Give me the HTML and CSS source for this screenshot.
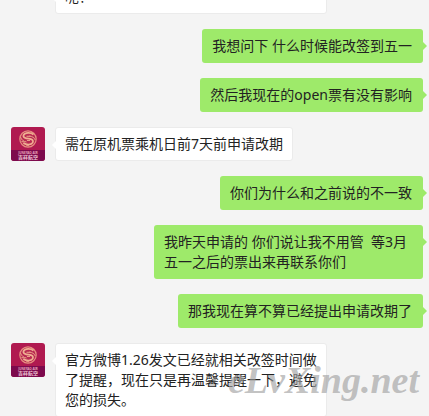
FILE: index.html
```html
<!DOCTYPE html>
<html lang="zh-CN">
<head>
    <meta charset="UTF-8">
    <meta name="viewport" content="width=device-width, initial-scale=1.0">
    <title>聊天记录</title>
    <link rel="stylesheet" href="styles.css">
</head>
<body>
    <!-- airline logo, used by each received message -->
    <svg class="symbols" aria-hidden="true">
        <symbol id="logo" viewBox="0 0 34 34">
            <rect width="34" height="34" fill="#b01a50"/>
            <rect y="23" width="34" height="11" fill="#7d0a4d"/>
            <circle cx="17" cy="12" r="8.2" fill="#b92a52" stroke="#e58f80" stroke-width="1.2"/>
            <path d="M22.500 7.500c-2.500-2.200-8.500-2.300-9.800.3-1.300 2.800 2.300 3.500 5 3.800 3.300.4 5.200 1.800 4 4.100-1.500 2.600-6.500 2.400-9.300.3" fill="none" stroke="#f0b092" stroke-width="1.700"/>
            <path d="M9.500 10c1 3 3 4.500 6 5M24.300 13c-1-2.500-3-3.500-6-4M10.500 14.500l3 .5M20 5.800l3 1M15 18l3 .8M15.500 9.300h4M16 13.500h3" fill="none" stroke="#e9a088" stroke-width="1"/>
            <text class="logo-en" x="17" y="27" text-anchor="middle">JUNEYAO AIR</text>
            <text class="logo-cn" x="17" y="32" text-anchor="middle">吉祥航空</text>
        </symbol>
    </svg>

    <main class="chat">
        <div class="message received">
            <div class="bubble wide">呢？</div>
        </div>
        <div class="message sent">
            <div class="bubble">我想问下 什么时候能改签到五一</div>
        </div>
        <div class="message sent">
            <div class="bubble">然后我现在的open票有没有影响</div>
        </div>
        <div class="message received">
            <svg class="avatar" role="img" aria-label="吉祥航空"><use href="#logo"/></svg>
            <div class="bubble">需在原机票乘机日前7天前申请改期</div>
        </div>
        <div class="message sent">
            <div class="bubble">你们为什么和之前说的不一致</div>
        </div>
        <div class="message sent">
            <div class="bubble">我昨天申请的 你们说让我不用管&nbsp; 等3月五一之后的票出来再联系你们</div>
        </div>
        <div class="message sent">
            <div class="bubble">那我现在算不算已经提出申请改期了</div>
        </div>
        <div class="message received">
            <svg class="avatar" role="img" aria-label="吉祥航空"><use href="#logo"/></svg>
            <div class="bubble wide">官方微博1.26发文已经就相关改签时间做了提醒，现在只是再温馨提醒一下，避免您的损失。</div>
        </div>
    </main>

    <div class="watermark">eLvXing.net</div>
</body>
</html>
```

FILE: styles.css
```css
* {
    box-sizing: border-box;
}
body {
    margin: 0;
    height: 100vh;
    overflow: hidden;
    position: relative;
    background: #f4f4f4;
    color: #222;
    font-family: "Noto Sans", "Noto Sans CJK SC", sans-serif;
    font-size: 14px;
    line-height: 20px;
}
.symbols {
    display: none;
}
/* scrolled down, the oldest message is partly above the window */
.chat {
    display: flex;
    flex-direction: column;
    gap: 15px;
    margin-top: -20px;
    padding: 0 6px 0 11px;
}
.message {
    display: flex;
    align-items: flex-start;
}
.sent {
    justify-content: flex-end;
}
.received {
    gap: 10px;
}
.received .bubble:first-child {
    margin-left: 44px;
}
.avatar {
    width: 34px;
    height: 34px;
    border-radius: 3px;
    flex: none;
}
.logo-en {
    font-size: 3px;
    font-weight: bold;
    fill: #e9a9bd;
}
.logo-cn {
    font-size: 5px;
    font-weight: bold;
    fill: #edc3d2;
}
.bubble {
    position: relative;
    max-width: 272px;
    padding: 7px 10px;
    border-radius: 3px;
}
.bubble::after {
    content: "";
    position: absolute;
    top: 13px;
    border: 4px solid transparent;
}
.sent .bubble {
    max-width: 269px;
    padding-right: 11px;
    background: #9eea6a;
}
.sent .bubble::after {
    left: 100%;
    border-left-color: #9eea6a;
}
.received .bubble {
    padding: 6px 9px;
    border: 1px solid #ebebeb;
    background: #fff;
}
.received .bubble::after {
    right: 100%;
    border-right-color: #fff;
}
.wide {
    width: 272px;
}
.watermark {
    position: absolute;
    right: 10px;
    bottom: 14px;
    color: rgba(160, 160, 160, 0.65);
    font-family: "Liberation Serif", serif;
    font-size: 38px;
    font-style: italic;
    font-weight: bold;
    line-height: 44px;
}
```
